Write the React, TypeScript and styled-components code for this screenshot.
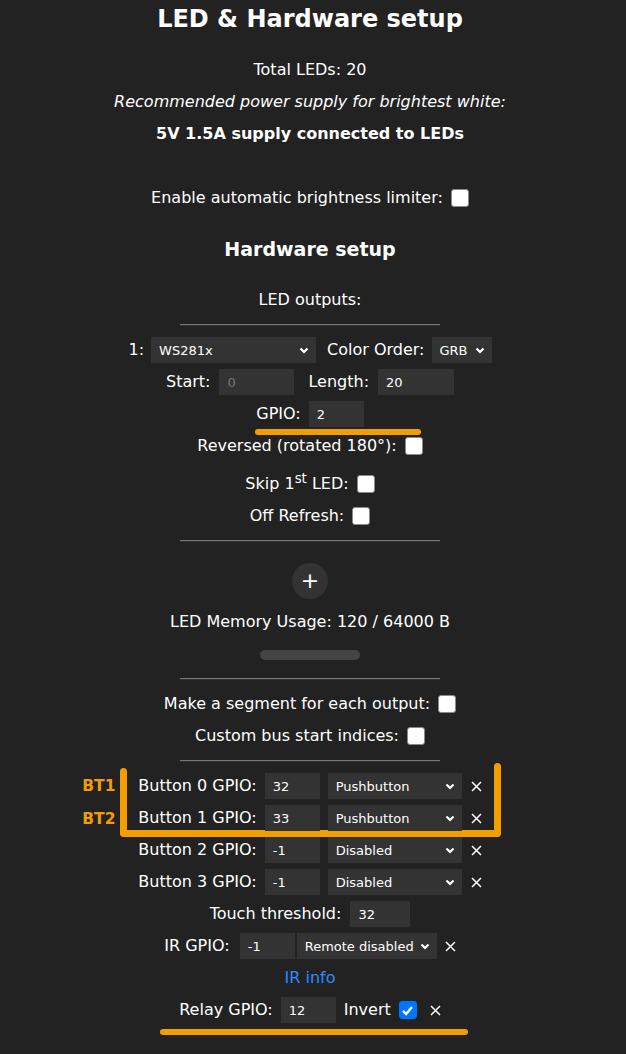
import { ReactNode } from "react";
import styled, { createGlobalStyle } from "styled-components";

const GlobalStyle = createGlobalStyle`
  html, body {
    margin: 0;
    padding: 0;
    background: #222;
  }
  body {
    font-family: "DejaVu Sans", Verdana, sans-serif;
    color: #fff;
    font-size: 16px;
  }
`

const Page = styled.div`
  width: 620px;
  min-height: 1053px;
  padding-top: 1px;
  text-align: center;
  line-height: 32px;
  display: flex;
  flex-direction: column;
  align-items: center;
`

const Title = styled.h2`
  font-size: 24px;
  line-height: 36px;
  margin: 0 0 17px;
  font-weight: bold;
`

const SubTitle = styled.h3`
  font-size: 19px;
  line-height: 32px;
  margin: 19px 0;
  font-weight: bold;
`

const Line = styled.div<{ $gap?: number }>`
  height: 32px;
  line-height: 32px;
  margin-bottom: ${(p) => p.$gap ?? 0}px;
`

const Rule = styled.hr`
  width: 260px;
  margin: 8px 0;
  border: none;
  border-top: 1px solid #777;
  border-bottom: 1px solid #333;
  height: 0;
`

const Row = styled.div<{ $top?: number; $gap?: number }>`
  position: relative;
  display: flex;
  align-items: center;
  justify-content: center;
  gap: ${(p) => p.$gap ?? 8}px;
  height: 32px;
  padding-top: ${(p) => p.$top ?? 0}px;
`

const Label = styled.span<{ $pad?: number }>`
  white-space: nowrap;
  margin-left: ${(p) => p.$pad ?? 0}px;
`

const Field = styled.input<{ $w: number }>`
  display: block;
  width: ${(p) => p.$w}px;
  height: 26px;
  box-sizing: border-box;
  background: #333;
  border: none;
  border-radius: 0;
  color: #fff;
  font-family: "DejaVu Sans", Verdana, sans-serif;
  font-size: 13px;
  padding: 0 8px;
  outline: none;
  &:disabled {
    color: #777;
  }
`

const SelectBox = styled.div<{ $w: number; $pull?: number }>`
  position: relative;
  width: ${(p) => p.$w}px;
  height: 26px;
  margin-left: ${(p) => p.$pull ?? 0}px;
`

const Select = styled.select`
  display: block;
  appearance: none;
  width: 100%;
  height: 100%;
  background: #333;
  border: none;
  border-radius: 0;
  color: #fff;
  font-family: "DejaVu Sans", Verdana, sans-serif;
  font-size: 13px;
  padding: 0 8px;
  outline: none;
`

const Chevron = styled.svg`
  position: absolute;
  right: 7px;
  top: 10px;
  pointer-events: none;
`

const Check = styled.span<{ $on?: boolean }>`
  display: inline-flex;
  align-items: center;
  justify-content: center;
  width: 18px;
  height: 18px;
  box-sizing: border-box;
  border-radius: 3px;
  background: ${(p) => (p.$on ? "#0075ff" : "#fff")};
  border: 1px solid ${(p) => (p.$on ? "#0075ff" : "#8a8a8a")};
`

const Remove = styled.svg<{ $pad?: number }>`
  display: block;
  margin-left: ${(p) => p.$pad ?? 0}px;
`

const AddButton = styled.button`
  width: 36px;
  height: 36px;
  border-radius: 50%;
  border: none;
  background: #333;
  color: #fff;
  font-size: 22px;
  line-height: 36px;
  padding: 0;
  margin: 13px 0 7px;
  font-family: "DejaVu Sans", Verdana, sans-serif;
`

const MemBar = styled.div`
  width: 100px;
  height: 10px;
  border-radius: 5px;
  background: #444;
  margin: 12px 0 10px;
`

const InfoLink = styled.a`
  color: #2b8cff;
  text-decoration: none;
`

const Underline = styled.div<{ $w: number; $left: number; $top: number }>`
  position: absolute;
  left: ${(p) => p.$left}px;
  top: ${(p) => p.$top}px;
  width: ${(p) => p.$w}px;
  height: 6px;
  border-radius: 3px;
  background: #f29d00;
`

const ButtonGroup = styled.div`
  position: relative;
  display: flex;
  flex-direction: column;
  align-items: center;
`

const Bracket = styled.svg`
  position: absolute;
  left: -18px;
  top: -7px;
  pointer-events: none;
`

const Tag = styled.span<{ $top: number }>`
  position: absolute;
  left: -56px;
  top: ${(p) => p.$top}px;
  color: #f29d00;
  font-weight: bold;
  font-size: 15.5px;
  line-height: 20px;
`

const ChevronIcon = () => (
  <Chevron width="10" height="7" viewBox="0 0 10 7">
    <path d="M1.5 1.5 L5 5 L8.5 1.5" stroke="#fff" strokeWidth="2.2" fill="none" />
  </Chevron>
)

const CloseIcon = ({ pad }: { pad?: number }) => (
  <Remove $pad={pad} width="11" height="11" viewBox="0 0 11 11">
    <path d="M1 1 L10 10 M10 1 L1 10" stroke="#fff" strokeWidth="1.5" />
  </Remove>
)

const TickIcon = () => (
  <svg width="13" height="13" viewBox="0 0 13 13">
    <path d="M2 6.8 L5.2 10 L11 3" stroke="#fff" strokeWidth="2.4" fill="none" />
  </svg>
)

const Dropdown = ({ w, value, pull }: { w: number; value: string; pull?: number }) => (
  <SelectBox $w={w} $pull={pull}>
    <Select defaultValue={value}>
      <option>{value}</option>
    </Select>
    <ChevronIcon />
  </SelectBox>
)

const CheckRow = ({ children, on, top }: { children: ReactNode; on?: boolean; top?: number }) => (
  <Row $top={top}>
    <Label>{children}</Label>
    <Check $on={on}>{on && <TickIcon />}</Check>
  </Row>
)

const ButtonRow = ({ n, gpio, mode }: { n: number; gpio: string; mode: string }) => (
  <Row>
    <Label>Button {n} GPIO:</Label>
    <Field $w={55} defaultValue={gpio} />
    <Dropdown w={134} value={mode} />
    <CloseIcon pad={1} />
  </Row>
)

export default function App() {
  return (
    <Page>
      <GlobalStyle />
      <Title>LED &amp; Hardware setup</Title>
      <Line>Total LEDs: 20</Line>
      <Line><i>Recommended power supply for brightest white:</i></Line>
      <Line $gap={32}><b>5V 1.5A supply connected to LEDs</b></Line>
      <CheckRow>Enable automatic brightness limiter:</CheckRow>
      <SubTitle>Hardware setup</SubTitle>
      <Line>LED outputs:</Line>
      <Rule />
      <Row $gap={7}>
        <Label>1:</Label>
        <Dropdown w={165} value="WS281x" />
        <Label $pad={4}>Color Order:</Label>
        <Dropdown w={60} value="GRB" />
      </Row>
      <Row $gap={9}>
        <Label>Start:</Label>
        <Field $w={75} defaultValue="0" disabled />
        <Label $pad={5}>Length:</Label>
        <Field $w={76} defaultValue="20" />
      </Row>
      <Row>
        <Label>GPIO:</Label>
        <Field $w={55} defaultValue="2" />
        <Underline $w={166} $left={-1} $top={31} />
      </Row>
      <CheckRow>Reversed (rotated 180°):</CheckRow>
      <CheckRow top={6}>
        Skip 1<sup style={{ lineHeight: 0 }}>st</sup> LED:
      </CheckRow>
      <CheckRow>Off Refresh:</CheckRow>
      <Rule />
      <AddButton>+</AddButton>
      <Line>LED Memory Usage: 120 / 64000 B</Line>
      <MemBar />
      <Rule />
      <CheckRow>Make a segment for each output:</CheckRow>
      <CheckRow>Custom bus start indices:</CheckRow>
      <Rule />
      <ButtonGroup>
        <Bracket width="384" height="76" viewBox="0 0 384 76">
          <path
            d="M3.5 8.5 V70.5 H377.5 V3.5"
            stroke="#f29d00"
            strokeWidth="7"
            strokeLinecap="round"
            strokeLinejoin="round"
            fill="none"
          />
        </Bracket>
        <Tag $top={6}>BT1</Tag>
        <Tag $top={39}>BT2</Tag>
        <ButtonRow n={0} gpio="32" mode="Pushbutton" />
        <ButtonRow n={1} gpio="33" mode="Pushbutton" />
      </ButtonGroup>
      <ButtonRow n={2} gpio="-1" mode="Disabled" />
      <ButtonRow n={3} gpio="-1" mode="Disabled" />
      <Row $gap={9}>
        <Label>Touch threshold:</Label>
        <Field $w={60} defaultValue="32" />
      </Row>
      <Row $gap={10}>
        <Label>IR GPIO:</Label>
        <Field $w={55} defaultValue="-1" />
        <Dropdown w={140} value="Remote disabled" pull={-8} />
        <CloseIcon pad={-2} />
      </Row>
      <Line><InfoLink href="#">IR info</InfoLink></Line>
      <Row $gap={8}>
        <Label>Relay GPIO:</Label>
        <Field $w={55} defaultValue="12" />
        <Label>Invert</Label>
        <Check $on><TickIcon /></Check>
        <CloseIcon pad={5} />
        <Underline $w={308} $left={-19} $top={35} />
      </Row>
    </Page>
  )
}
